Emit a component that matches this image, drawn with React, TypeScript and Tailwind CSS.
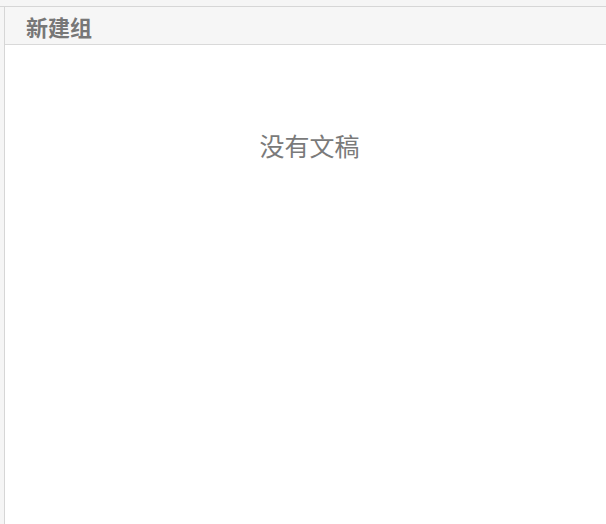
export default function App() {
  return (
    <div
      className="w-[606px] h-[524px] bg-[#f5f5f5] flex flex-col overflow-hidden"
      style={{ fontFamily: '"Noto Sans CJK SC", "Noto Sans", sans-serif' }}
    >
      <div className="h-[6px] shrink-0" />
      <div className="flex-1 flex flex-row border-t border-[#d6d6d6]">
        <div className="w-[4px] shrink-0" />
        <div className="flex-1 flex flex-col border-l border-[#d6d6d6] bg-white">
          <div className="h-[38px] shrink-0 bg-[#f6f6f6] border-b border-[#d9d9d9] flex items-center pl-[21px]">
            <span className="text-[22px] font-bold text-[#777777] leading-none">新建组</span>
          </div>
          <div className="flex justify-center pt-[84px] pl-[8px]">
            <span className="text-[25px] text-[#7a7a7a] leading-[32px]">没有文稿</span>
          </div>
        </div>
      </div>
    </div>
  );
}
